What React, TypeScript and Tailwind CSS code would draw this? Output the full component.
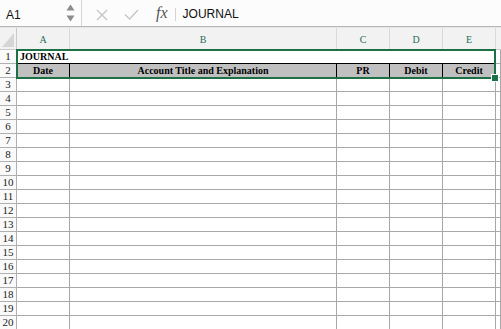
import React from "react";

const serif = { fontFamily: '"Liberation Serif", "Times New Roman", serif' };
const sans = { fontFamily: '"Liberation Sans", Arial, sans-serif' };

const letters = ["A", "B", "C", "D", "E"];

export default function App() {
  const rows = Array.from({ length: 20 }, (_, i) => i + 1);
  return (
    <div className="w-[501px] h-[329px] overflow-hidden bg-white" style={sans}>
      {/* Formula bar */}
      <div className="flex h-[27px] items-stretch border-b border-[#b6b6b6] bg-[#fcfcfc]">
        <div className="flex w-[82px] items-center justify-between border-r border-[#d6d6d6] pl-[6px] pr-[6px]">
          <span className="pt-[3px] text-[12px] text-[#111]">A1</span>
          <svg width="9" height="20" viewBox="0 0 9 20" className="mt-[1px]">
            <path d="M0.5 6.5 L4.5 0.5 L8.5 6.5 Z" fill="#8c8c8c" />
            <path d="M0.5 11.5 L4.5 17.5 L8.5 11.5 Z" fill="#8c8c8c" />
          </svg>
        </div>
        <div className="flex items-center pl-[14px]">
          <svg width="12" height="12" viewBox="0 0 12 12" className="mt-[3px]">
            <path d="M1 1 L11 11 M11 1 L1 11" stroke="#c6c6c6" strokeWidth="1.4" />
          </svg>
          <svg width="15" height="11" viewBox="0 0 15 11" className="ml-[16px] mt-[3px]">
            <path d="M1 5.5 L5.5 10 L14 1" stroke="#c6c6c6" strokeWidth="1.4" fill="none" />
          </svg>
          <span className="ml-[17px] text-[16px] italic text-[#555]" style={serif}>
            fx
          </span>
          <div className="ml-[7px] mt-[2px] h-[13px] w-px bg-[#d4d4d4]" />
          <span className="ml-[7px] pt-[1px] text-[12px] text-[#111]">JOURNAL</span>
        </div>
      </div>
      <div className="h-px bg-[#e6e6e6]" />

      {/* Grid */}
      <div
        className="relative grid grid-cols-[17px_53px_267px_53px_53px_53px_1fr] grid-rows-[22px_repeat(20,14px)]"
        style={serif}
      >
        {/* corner */}
        <div className="flex items-end justify-end border-b border-r border-[#c9c9c9] bg-[#f2f2f2] pb-[2px] pr-[2px]">
          <svg width="12" height="14" viewBox="0 0 12 14">
            <path d="M0 14 L12 0 L12 14 Z" fill="#d6d6d6" />
          </svg>
        </div>
        {letters.map((l) => (
          <div
            key={l}
            className="flex items-center justify-center border-b border-r border-[#d9d9d9] bg-[#f2f2f2] pt-[2px] text-[10px] text-[#1f6e58]"
          >
            {l}
          </div>
        ))}
        <div className="border-b border-[#c9c9c9] bg-[#f2f2f2]" />

        {rows.map((r) => (
          <React.Fragment key={r}>
            <div className="flex items-center justify-center border-b border-r border-[#b0b0b0] bg-[#fafafa] text-[11px] leading-none text-[#222]">
              {r}
            </div>
            {r === 1 ? (
              <>
                <div className="relative border-b border-black">
                  <span className="absolute left-[3px] top-[0px] whitespace-nowrap text-[10px] font-bold leading-[13px] text-black">
                    JOURNAL
                  </span>
                </div>
                <div className="border-b border-black" />
                <div className="border-b border-black" />
                <div className="border-b border-black" />
                <div className="border-b border-black" />
                <div className="border-b border-r border-[#a8a8a8]" />
              </>
            ) : r === 2 ? (
              <>
                {["Date", "Account Title and Explanation", "PR", "Debit", "Credit"].map((t) => (
                  <div
                    key={t}
                    className="flex items-center justify-center border-b border-r border-b-[#a8a8a8] border-r-black bg-[#c0c0c0] text-[10px] font-bold leading-none text-black"
                  >
                    {t}
                  </div>
                ))}
                <div className="border-b border-r border-[#a8a8a8]" />
              </>
            ) : (
              <>
                {letters.map((l) => (
                  <div key={l} className="border-b border-r border-[#a8a8a8]" />
                ))}
                <div className="border-b border-r border-[#a8a8a8]" />
              </>
            )}
          </React.Fragment>
        ))}

        {/* selection overlay */}
        <div className="pointer-events-none absolute left-[16px] top-[21px] h-[30px] w-[480px] border-2 border-[#1d7045]" />
        <div className="pointer-events-none absolute left-[491px] top-[46px] h-[8px] w-[8px] border border-white bg-[#1d7045]" />
      </div>
    </div>
  );
}
